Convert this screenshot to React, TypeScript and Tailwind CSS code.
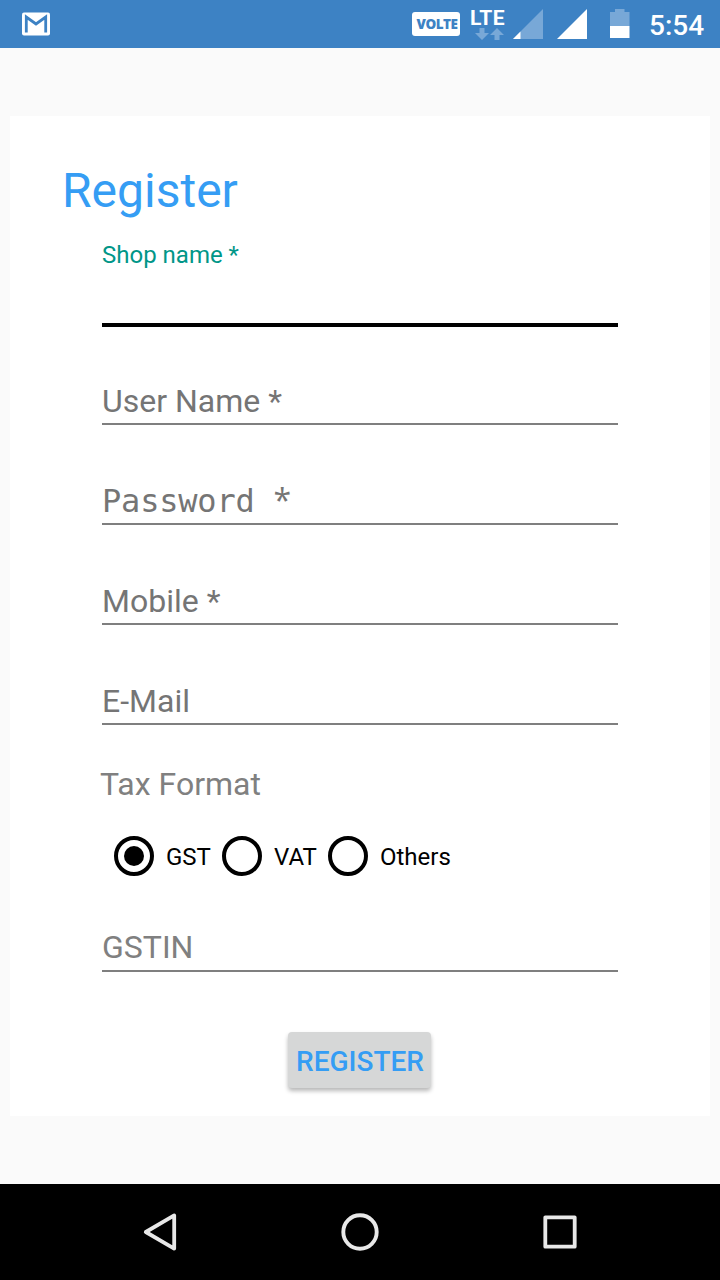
import { useState } from 'react';
import clsx from 'clsx';

const TAX_FORMATS = [
    { label: 'GST', width: 'w-[108px]' },
    { label: 'VAT', width: 'w-[106px]' },
    { label: 'Others', width: 'w-[140px]' },
];

function StatusBar() {
    return (
        <header className="flex h-12 shrink-0 items-start bg-[#3d82c4] text-white">
            <svg className="mt-3 ml-[22px] h-6 w-7" viewBox="0 0 28 24">
                <rect y="0.5" width="28" height="23" rx="2" fill="#fff" />
                <path d="M4.3 20.5V5L14 12L23.7 5V20.5" fill="none" stroke="#3d82c4" strokeWidth="2.8" />
            </svg>

            <div className="mt-3 ml-[362px] flex h-6 w-12 items-center justify-center rounded-[3px] bg-white pt-px pl-[2px] font-['Open_Sans',sans-serif] text-[13.5px] leading-none font-extrabold tracking-[-0.5px] text-[#3d82c4]">
                VOLTE
            </div>

            <div className="mt-2 ml-[10px] w-[37px]">
                <div className="h-5 font-['Roboto',sans-serif] text-[21px] leading-5 font-bold tracking-[0.3px]">LTE</div>
                <svg className="ml-[5px] h-3 w-[29px]" viewBox="0 0 29 12">
                    <path d="M4.5 0H9.5V5H14L7 12L0 5H4.5Z" fill="#78a8d7" />
                    <path d="M19.5 12H24.5V7H29L22 0L15 7H19.5Z" fill="#78a8d7" />
                </svg>
            </div>

            <svg className="mt-[9px] ml-[6px] h-[30px] w-[30px]" viewBox="0 0 30 30">
                <path d="M0 30L30 0V30Z" fill="#78a8d7" />
                <path d="M0 30L7.5 22.5V30Z" fill="#fff" />
            </svg>
            <svg className="mt-[9px] ml-[14px] h-[30px] w-[30px]" viewBox="0 0 30 30">
                <path d="M0 30L30 0V30Z" fill="#fff" />
            </svg>
            <svg className="mt-[9px] ml-[23px] h-[29px] w-5" viewBox="0 0 20 29">
                <path d="M0 3H5V0H14.5V3H19.5V17H0Z" fill="#78a8d7" />
                <path d="M0 17H19.5V29H0Z" fill="#fff" />
            </svg>

            <span className="mt-[9px] ml-[19px] text-[28px] leading-[33px] font-medium">5:54</span>
        </header>
    );
}

function Field({ label, required = false, mono = false }: { label: string; required?: boolean; mono?: boolean }) {
    return (
        <div className="mx-[92px] flex h-[100px] flex-col justify-end border-b-2 border-[#7f7f7f] pb-[3px]">
            <label
                className={clsx(
                    'h-[38px] text-[32px] leading-[38px] whitespace-pre text-[#757575]',
                    mono && "font-['DejaVu_Sans_Mono',monospace] tracking-[-0.2px]"
                )}
            >
                {label}
                {required && ' '}
                {required && <span className={clsx(mono && "font-['Open_Sans',sans-serif] leading-none")}>*</span>}
            </label>
        </div>
    );
}

function NavBar() {
    return (
        <nav className="flex h-24 shrink-0 items-center justify-between bg-black px-[140px]">
            <svg className="h-10 w-10" viewBox="0 0 40 40" fill="none" stroke="#e8e8e8" strokeWidth="3.8" strokeLinejoin="round">
                <path d="M34.2 3.4V36.6L5.8 20Z" />
            </svg>
            <svg className="h-10 w-10" viewBox="0 0 40 40" fill="none" stroke="#e8e8e8" strokeWidth="3.9">
                <circle cx="20" cy="20" r="16.7" />
            </svg>
            <svg className="h-10 w-10" viewBox="0 0 40 40" fill="none" stroke="#e8e8e8" strokeWidth="3.8" strokeLinejoin="round">
                <rect x="5.3" y="5.3" width="29.4" height="29.4" />
            </svg>
        </nav>
    );
}

export default function App() {
    const [taxFormat, setTaxFormat] = useState('GST');

    return (
        <div className="flex h-[1280px] w-[720px] flex-col bg-[#fafafa] font-['Roboto',sans-serif]">
            <StatusBar />

            <main className="flex-1 px-[10px] pt-[68px]">
                <form className="flex h-[1000px] flex-col bg-white pt-[47px]">
                    <h1 className="ml-[52px] text-[48px] leading-[56px] text-[#359df4]">Register</h1>

                    {/* Focused field, label floats above */}
                    <div className="mx-[92px] mt-[22px] h-[86px] border-b-4 border-black">
                        <label className="block text-[24px] leading-[28px] text-[#009688]">Shop name *</label>
                    </div>

                    <div className="-mt-[2px]">
                        <Field label="User Name" required />
                        <Field label="Password" required mono />
                        <Field label="Mobile" required />
                        <Field label="E-Mail" />
                    </div>

                    <p className="mt-10 ml-[90px] text-[32px] leading-[38px] text-[#808080]">Tax Format</p>

                    <div className="mt-[33px] ml-[104px] flex">
                        {TAX_FORMATS.map(({ label, width }) => (
                            <button
                                key={label}
                                type="button"
                                onClick={() => setTaxFormat(label)}
                                className={clsx('flex h-10 items-center gap-3', width)}
                            >
                                <span className="flex h-10 w-10 shrink-0 items-center justify-center rounded-full border-4 border-black">
                                    {taxFormat === label && <span className="h-5 w-5 rounded-full bg-black" />}
                                </span>
                                <span className="pt-[2px] text-[24px] leading-[28px] text-black">{label}</span>
                            </button>
                        ))}
                    </div>

                    <div className="mx-[92px] mt-[52px] h-11 border-b-2 border-[#7f7f7f]">
                        <label className="block text-[32px] leading-[38px] text-[#808080]">GSTIN</label>
                    </div>

                    <button
                        type="button"
                        className="mt-[60px] ml-[278px] flex h-14 w-[143px] items-center justify-center rounded-[4px] bg-[#d6d7d7] pt-1 pl-px text-[28px] font-medium text-[#359df4] shadow-[0_3px_4px_rgba(0,0,0,0.28)]"
                    >
                        REGISTER
                    </button>
                </form>
            </main>

            <NavBar />
        </div>
    );
}
